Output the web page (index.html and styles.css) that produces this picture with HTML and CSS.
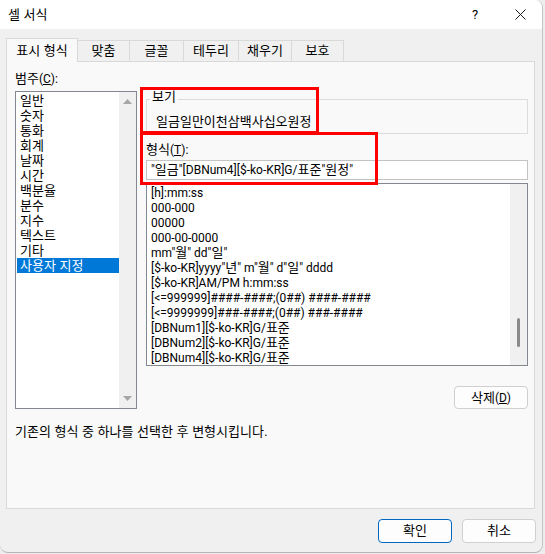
FILE: index.html
```html
<!DOCTYPE html>
<html lang="ko">
<head>
<meta charset="utf-8">
<title>셀 서식</title>
<link rel="stylesheet" href="styles.css">
</head>
<body>
<div class="window">
  <div class="titlebar">
    <span class="title ko">셀 서식</span>
    <span class="help">?</span>
    <svg class="close" viewBox="0 0 11 11" width="11" height="11"><path d="M0.5 0.5 L10.5 10.5 M10.5 0.5 L0.5 10.5" stroke="#1a1a1a" stroke-width="1" fill="none"/></svg>
  </div>
  <div class="tabs">
    <div class="tab active t1 ko">표시 형식</div>
    <div class="tab t2 ko">맞춤</div>
    <div class="tab t3 ko">글꼴</div>
    <div class="tab t4 ko">테두리</div>
    <div class="tab t5 ko">채우기</div>
    <div class="tab t6 ko">보호</div>
  </div>
  <div class="panel">
    <div class="columns">
      <div class="left">
        <div class="label"><span class="ko">범주</span>(<u>C</u>):</div>
        <div class="catlist">
          <ul class="cat-items ko">
            <li>일반</li>
            <li>숫자</li>
            <li>통화</li>
            <li>회계</li>
            <li>날짜</li>
            <li>시간</li>
            <li>백분율</li>
            <li>분수</li>
            <li>지수</li>
            <li>텍스트</li>
            <li>기타</li>
            <li class="sel">사용자 지정</li>
          </ul>
          <div class="vscroll">
            <svg width="9" height="5" viewBox="0 0 9 5"><path d="M0 5 L4.5 0 L9 5 Z" fill="#a6a6a6"/></svg>
            <svg width="9" height="5" viewBox="0 0 9 5"><path d="M0 0 L4.5 5 L9 0 Z" fill="#a6a6a6"/></svg>
          </div>
        </div>
      </div>
      <div class="right">
        <fieldset class="sample">
          <legend class="ko">보기</legend>
          <div class="sample-text ko">일금일만이천삼백사십오원정</div>
        </fieldset>
        <div class="label fmt-label"><span class="ko">형식</span>(<u>T</u>):</div>
        <div class="input">"<span class="ko">일금</span>"[DBNum4][$-ko-KR]G/<span class="ko">표준</span>"<span class="ko">원정</span>"</div>
        <div class="fmtlist">
          <ul class="fmt-items">
            <li>[h]:mm:ss</li>
            <li>000-000</li>
            <li>00000</li>
            <li>000-00-0000</li>
            <li>mm"<span class="ko">월</span>" dd"<span class="ko">일</span>"</li>
            <li>[$-ko-KR]yyyy"<span class="ko">년</span>" m"<span class="ko">월</span>" d"<span class="ko">일</span>" dddd</li>
            <li>[$-ko-KR]AM/PM h:mm:ss</li>
            <li>[&lt;=999999]####-####;(0##) ####-####</li>
            <li>[&lt;=9999999]###-####;(0##) ###-####</li>
            <li>[DBNum1][$-ko-KR]G/<span class="ko">표준</span></li>
            <li>[DBNum2][$-ko-KR]G/<span class="ko">표준</span></li>
            <li>[DBNum4][$-ko-KR]G/<span class="ko">표준</span></li>
          </ul>
          <div class="vscroll2"><div class="thumb"></div></div>
        </div>
        <div class="btnrow"><button class="btn"><span class="ko">삭제</span>(<u>D</u>)</button></div>
      </div>
    </div>
    <div class="desc ko">기존의 형식 중 하나를 선택한 후 변형시킵니다.</div>
  </div>
  <div class="footer">
    <button class="btn primary ko">확인</button>
    <button class="btn ko">취소</button>
  </div>
  <div class="mark mark1"></div>
  <div class="mark mark2"></div>
</div>
</body>
</html>
```
FILE: styles.css
```css
* { box-sizing: border-box; }
html, body { margin: 0; padding: 0; }
body {
  background: #ededed;
  font-family: Roboto, "Noto Sans CJK KR", sans-serif;
  font-size: 12px;
  color: #000;
  width: 545px;
  height: 554px;
  overflow: hidden;
}
.ko { font-family: "Liberation Sans", "Noto Sans CJK KR", sans-serif; font-size: 13px; }
.label .ko, .input .ko, .fmt-items .ko, .btn .ko { line-height: 0; }
.window {
  position: relative;
  width: 543px;
  height: 553px;
  background: #f0f0f0;
  border-right: 1px solid #c4c4c4;
  border-bottom: 1px solid #b5b5b5;
  border-radius: 0 8px 8px 8px;
  overflow: hidden;
  display: flex;
  flex-direction: column;
}
.titlebar {
  height: 29px;
  flex: none;
  background: #fff;
  display: flex;
  align-items: center;
  padding-left: 8px;
}
.title { flex: 1; line-height: 16px; }
.help { width: 10px; text-align: center; margin-right: 35px; font-size: 13px; line-height: 16px; }
.close { width: 11px; height: 11px; margin-right: 16px; }

.tabs {
  flex: none;
  display: flex;
  align-items: flex-end;
  height: 23px;
  margin-top: 9px;
  padding-left: 6px;
  position: relative;
  z-index: 1;
}
.tab {
  height: 21px;
  border: 1px solid #d9d9d9;
  border-bottom: none;
  margin-left: -1px;
  display: flex;
  align-items: center;
  justify-content: center;
  line-height: 16px;
  background: #f0f0f0;
}
.tab.active {
  margin-left: 0;
  height: 24px;
  margin-bottom: -1px;
  background: #f9f9f9;
  position: relative;
  z-index: 2;
}
.t1 { width: 72px; }
.t2 { width: 53px; }
.t3 { width: 55px; }
.t4 { width: 56px; }
.t5 { width: 54px; }
.t6 { width: 53px; }

.panel {
  flex: none;
  margin-left: 6px;
  width: 529px;
  height: 448px;
  background: #f9f9f9;
  border: 1px solid #d9d9d9;
  padding: 9px 6px 0 8px;
}
.columns { display: flex; gap: 9px; }
.left { width: 122px; }
.right { width: 382px; }
.label { line-height: 16px; height: 16px; white-space: nowrap; }

.catlist {
  margin-top: 4px;
  height: 318px;
  border: 1px solid #828790;
  background: #fff;
  display: flex;
}
.cat-items { flex: 1; list-style: none; margin: 0; padding: 1px 0 0 1px; }
.cat-items li { line-height: 15px; height: 15px; padding-left: 3px; white-space: nowrap; }
.cat-items li.sel { background: #0078d7; color: #fff; }
.vscroll {
  width: 17px;
  background: #f0f0f0;
  display: flex;
  flex-direction: column;
  justify-content: space-between;
  align-items: center;
  padding: 7px 0 7px;
}
.vscroll svg { display: block; }

.sample {
  margin: 18px 0 0;
  padding: 0 0 3px;
  border: 1px solid #dcdcdc;
  min-width: 0;
}
.sample legend { margin-left: 3px; padding: 0 2px 4px; line-height: 16px; }
.sample-text { padding: 5px 0 0 9px; line-height: 16px; }
.fmt-label { margin-top: 8px; }
.input {
  margin-top: 2px;
  height: 20px;
  border: 1px solid #c3c3c3;
  background: #fff;
  padding-left: 4px;
  line-height: 18px;
  white-space: nowrap;
}
.fmtlist {
  margin-top: 3px;
  height: 183px;
  border: 1px solid #828790;
  background: #fff;
  display: flex;
}
.fmt-items { flex: 1; list-style: none; margin: 0; padding: 2px 0 0 4px; }
.fmt-items li { line-height: 15px; height: 15px; white-space: nowrap; }
.vscroll2 { width: 17px; background: #f0f0f0; display: flex; justify-content: center; }
.thumb { width: 3px; height: 29px; margin-top: 134px; background: #8a8a8a; border-radius: 2px; }

.btnrow { display: flex; justify-content: flex-end; margin-top: 20px; }
.btn {
  width: 74px;
  height: 23px;
  border: 1px solid #d0d0d0;
  border-radius: 4px;
  background: #fdfdfd;
  font-family: Roboto, "Noto Sans CJK KR", sans-serif;
  font-size: 12px;
  color: #000;
  padding: 0;
  line-height: 16px;
}
.btn.ko { font-family: "Liberation Sans", "Noto Sans CJK KR", sans-serif; font-size: 13px; }
.desc { margin-top: 15px; line-height: 16px; }

.footer {
  flex: none;
  display: flex;
  justify-content: flex-end;
  gap: 10px;
  padding: 10px 6px 0 0;
}
.footer .btn { height: 24px; }
.btn.primary { border-color: #0067c0; }

.mark { position: absolute; border: 3px solid #ff0000; pointer-events: none; }
.mark1 { left: 140px; top: 87px; width: 179px; height: 47px; }
.mark2 { left: 140px; top: 132px; width: 238px; height: 53px; }
```
